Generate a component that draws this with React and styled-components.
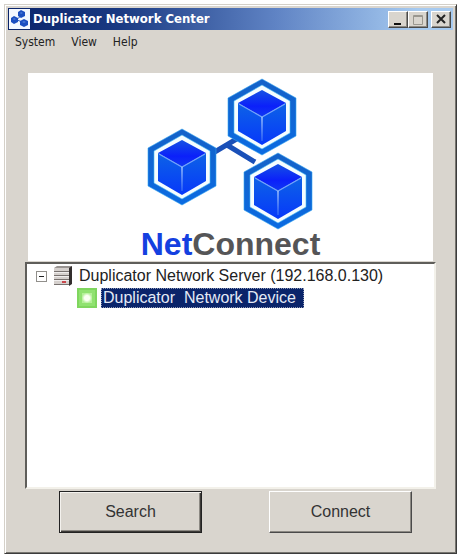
import React, { useState } from 'react';
import styled, { createGlobalStyle, css } from 'styled-components';

const face = '#d9d5ce';

const raised = css`
  border: 1px solid;
  border-color: #fff #4a4a4a #4a4a4a #fff;
  box-shadow: inset -1px -1px 0 #8c8983;
`;

const GlobalStyle = createGlobalStyle`
  * {
    box-sizing: border-box;
  }
  body {
    margin: 0;
    background: #fff;
    font-family: 'Liberation Sans', Arial, sans-serif;
    color: #222;
  }
`;

const Page = styled.div`
  display: flex;
  min-height: 100vh;
  padding: 4px 5px 5px 4px;
`;

const Window = styled.main`
  flex: 1;
  display: flex;
  flex-direction: column;
  min-width: 0;
  padding: 3px;
  background: ${face};
  border: 1px solid;
  border-color: #d4d0c8 #3c3c3c #3c3c3c #d4d0c8;
  box-shadow: inset 1px 1px 0 #fff, inset -1px -1px 0 #77756f;
`;

const TitleBar = styled.header`
  display: flex;
  align-items: center;
  height: 22px;
  padding: 0 2px 0 1px;
  background: linear-gradient(90deg, #0a246a 0%, #1a3a82 25%, #5f83c4 60%, #a6caf0 92%);
  h1 {
    flex: 1;
    margin: 0 0 0 3px;
    font: bold 13px 'DejaVu Sans Condensed', 'DejaVu Sans', sans-serif;
    line-height: 20px;
    white-space: nowrap;
    color: #fff;
  }
`;

const Caption = styled.button`
  ${raised}
  display: flex;
  width: 20px;
  height: 17px;
  padding: 0;
  background: ${face};
  margin-left: ${({ $apart }) => ($apart ? '3px' : '0')};
`;

const MenuBar = styled.nav`
  display: flex;
  gap: 16px;
  padding: 2px 7px 0;
  button {
    padding: 0;
    border: 0;
    background: none;
    color: #222;
    font: 12px 'DejaVu Sans Condensed', 'DejaVu Sans', sans-serif;
    line-height: 20px;
  }
`;

const Content = styled.div`
  flex: 1;
  display: flex;
  flex-direction: column;
  padding: 21px 17px 17px;
`;

const Banner = styled.section`
  display: flex;
  flex-direction: column;
  align-items: center;
  height: 188px;
  margin: 0 3px 1px;
  padding-top: 5px;
  background: #fff;
`;

const Brand = styled.div`
  font-size: 32px;
  font-weight: bold;
  line-height: 28px;
  color: #555557;
  span {
    color: #1440e0;
  }
`;

const Tree = styled.ul`
  flex: 1;
  min-height: 120px;
  margin: 0;
  padding: 1px 9px;
  list-style: none;
  background: #fff;
  border: 2px solid;
  border-color: #5f5e5a #f3f1ea #f3f1ea #5f5e5a;
  font-size: 16px;
  line-height: 22px;
  ul {
    margin: 0;
    padding: 0 0 0 41px;
    list-style: none;
  }
`;

const Row = styled.div`
  display: flex;
  align-items: center;
  height: 22px;
  white-space: pre;
`;

const Toggle = styled.button`
  display: flex;
  width: 11px;
  height: 11px;
  margin-right: 6px;
  padding: 0;
  border: 1px solid #918f8b;
  background: #fff;
`;

const Label = styled.span`
  margin-left: 4px;
  padding: 0 8px 0 2px;
  line-height: 20px;
  ${({ $selected }) =>
    $selected &&
    css`
      color: #e4eaf6;
      background: #0a246a;
      outline: 1px dotted #8f98b4;
      outline-offset: -1px;
    `}
`;

const Actions = styled.div`
  display: flex;
  justify-content: space-between;
  padding: 2px 24px 0 34px;
`;

const ActionButton = styled.button`
  ${raised}
  width: 143px;
  height: 42px;
  background: ${face};
  color: #333;
  font: 16px 'Liberation Sans', Arial, sans-serif;
  ${({ $primary }) =>
    $primary &&
    css`
      border-color: #222;
      box-shadow: inset 1px 1px 0 #f4f2ee, inset -1px -1px 0 #3c3a37, inset -2px -2px 0 #8c8983;
    `}
`;

const AppIcon = () => (
  <svg width="21" height="20" viewBox="0 0 21 20" aria-hidden="true">
    <path fill="#f4f8ff" d="M0 0h21v20H0z" />
    <path stroke="#2a5cc0" strokeWidth="1" d="M6 12l7-6M8 11l8 3" />
    <path fill="#1c4fc0" d="M12 1l4 2v4l-4 2-3-2V3zM5 7l4 2v4l-4 2-3-2V9zM15 10l4 2v4l-4 2-4-2v-4z" />
    <path fill="#4a7ad8" d="M12 3l2 1-2 1-1-1zM5 9l2 1-2 1-1-1zM15 12l2 1-2 1-2-1z" />
  </svg>
);

const cubes = [
  [115, 39],
  [35, 89],
  [131, 113],
];

const Logo = () => (
  <svg width="168" height="152" viewBox="0 0 168 152" role="img" aria-label="NetConnect">
    <defs>
      <linearGradient id="rim" x2="0" y2="1">
        <stop offset="0" stopColor="#1462c8" />
        <stop offset="1" stopColor="#0b6be2" />
      </linearGradient>
      <linearGradient id="top" x2="0" y2="1">
        <stop offset="0" stopColor="#1552e4" />
        <stop offset=".6" stopColor="#0b20fa" />
        <stop offset="1" stopColor="#1038f2" />
      </linearGradient>
      <linearGradient id="side" x2="0" y2="1">
        <stop offset="0" stopColor="#0d63e6" />
        <stop offset="1" stopColor="#0738fa" />
      </linearGradient>
      <linearGradient id="edge" gradientUnits="userSpaceOnUse" x1="0" y1="0" x2="0" y2="24">
        <stop offset="0" stopColor="#a9c8ff" />
        <stop offset="1" stopColor="#2f66f4" />
      </linearGradient>
    </defs>
    <path d="M66 75L98 56M80 67L108 84" stroke="#1a50b8" strokeWidth="5" />
    {cubes.map(([x, y]) => (
      <g key={x} transform={`translate(${x} ${y})`}>
        <path d="M0-38L34-19V19L0 38L-34 19V-19Z" fill="url(#rim)" stroke="#35a4f0" strokeWidth=".6" />
        <path d="M0-32L28-16V16L0 32L-28 16V-16Z" fill="#f5fdff" stroke="#48b9f3" strokeWidth=".6" />
        <path d="M0-27L24-14L0 0L-24-14Z" fill="url(#top)" />
        <path d="M-24-14L0 0V28L-24 14Z" fill="url(#side)" />
        <path d="M24-14L0 0V28L24 14Z" fill="url(#side)" />
        <path d="M-23-13L0 0L23-13" fill="none" stroke="#72a3fa" strokeWidth="1.2" />
        <path d="M0 0L.01 24" stroke="url(#edge)" strokeWidth="1.4" />
      </g>
    ))}
  </svg>
);

const ServerIcon = () => (
  <svg width="20" height="20" viewBox="0 0 20 20" aria-hidden="true">
    <path fill="#999491" d="M1 2l3-2h15l-2 3H1z" />
    <path fill="#d5d0cd" d="M1 2h15v17H1z" />
    <path fill="#332e2d" d="M16 2l3-2v18l-3 2z" />
    <path stroke="#77716f" d="M1 5.5h15M1 9.5h15M1 13.5h15M1 18.5h15" />
    <path stroke="#f0eeee" d="M1 6.5h15M1 10.5h15M1 14.5h15" />
    <path fill="#c9474d" d="M9 15h4v2H9z" />
  </svg>
);

const DeviceIcon = () => (
  <svg width="20" height="20" viewBox="0 0 20 20" aria-hidden="true">
    <defs>
      <radialGradient id="glow">
        <stop offset=".5" stopColor="#fbfff4" />
        <stop offset="1" stopColor="#b4f098" />
      </radialGradient>
    </defs>
    <path fill="#7fd65e" d="M0 0h20v20H0z" />
    <path fill="#90e270" d="M2 2h16v16H2z" />
    <path fill="url(#glow)" d="M5 5h10v10H5z" />
  </svg>
);

const captions = [
  { name: 'Minimize', icon: <path fill="#111" d="M5 11h7v2H5z" /> },
  { name: 'Maximize', icon: <path fill="none" stroke="#9a978f" d="M4.500 3.500h9v9h-9zM4 4.500h10" /> },
  { name: 'Close', icon: <path stroke="#222" strokeWidth="2" d="M5 3l8 8M13 3l-8 8" />, apart: true },
];

export default function App() {
  const [open, setOpen] = useState(true);
  const [selected, setSelected] = useState('device');

  return (
    <>
      <GlobalStyle />
      <Page>
        <Window>
          <TitleBar>
            <AppIcon />
            <h1>Duplicator Network Center</h1>
            {captions.map(({ name, icon, apart }) => (
              <Caption key={name} type="button" aria-label={name} $apart={apart}>
                <svg width="18" height="15" viewBox="0 0 18 15">
                  {icon}
                </svg>
              </Caption>
            ))}
          </TitleBar>
          <MenuBar>
            {['System', 'View', 'Help'].map((item) => (
              <button key={item} type="button">
                {item}
              </button>
            ))}
          </MenuBar>
          <Content>
            <Banner>
              <Logo />
              <Brand>
                <span>Net</span>Connect
              </Brand>
            </Banner>
            <Tree>
              <li>
                <Row onClick={() => setSelected('server')}>
                  <Toggle type="button" aria-label="Toggle server" aria-expanded={open} onClick={() => setOpen(!open)}>
                    <svg width="9" height="9" viewBox="0 0 9 9">
                      <path stroke="#222" d={open ? 'M2 4.500h5' : 'M2 4.500h5M4.500 2v5'} />
                    </svg>
                  </Toggle>
                  <ServerIcon />
                  <Label $selected={selected === 'server'}>Duplicator Network Server (192.168.0.130)</Label>
                </Row>
                {open && (
                  <ul>
                    <li>
                      <Row onClick={() => setSelected('device')}>
                        <DeviceIcon />
                        <Label $selected={selected === 'device'}>{'Duplicator  Network Device'}</Label>
                      </Row>
                    </li>
                  </ul>
                )}
              </li>
            </Tree>
            <Actions>
              <ActionButton type="button" $primary>
                Search
              </ActionButton>
              <ActionButton type="button">Connect</ActionButton>
            </Actions>
          </Content>
        </Window>
      </Page>
    </>
  );
}
